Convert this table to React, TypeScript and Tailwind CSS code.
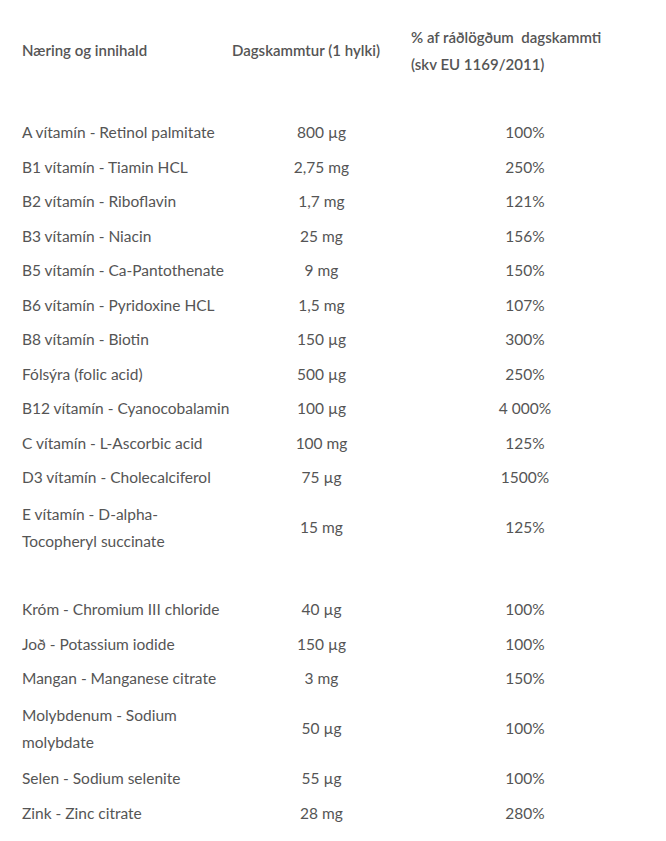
type Row = { name: string[]; dose: string; pct: string } | null;

const ROWS: Row[] = [
  null,
  { name: ['A vítamín - Retinol palmitate'], dose: '800 µg', pct: '100%' },
  { name: ['B1 vítamín - Tiamin HCL'], dose: '2,75 mg', pct: '250%' },
  { name: ['B2 vítamín - Riboflavin'], dose: '1,7 mg', pct: '121%' },
  { name: ['B3 vítamín - Niacin'], dose: '25 mg', pct: '156%' },
  { name: ['B5 vítamín - Ca-Pantothenate'], dose: '9 mg', pct: '150%' },
  { name: ['B6 vítamín - Pyridoxine HCL'], dose: '1,5 mg', pct: '107%' },
  { name: ['B8 vítamín - Biotin'], dose: '150 µg', pct: '300%' },
  { name: ['Fólsýra (folic acid)'], dose: '500 µg', pct: '250%' },
  { name: ['B12 vítamín - Cyanocobalamin'], dose: '100 µg', pct: '4 000%' },
  { name: ['C vítamín - L-Ascorbic acid'], dose: '100 mg', pct: '125%' },
  { name: ['D3 vítamín - Cholecalciferol'], dose: '75 µg', pct: '1500%' },
  { name: ['E vítamín - D-alpha-', 'Tocopheryl succinate'], dose: '15 mg', pct: '125%' },
  null,
  { name: ['Króm - Chromium III chloride'], dose: '40 µg', pct: '100%' },
  { name: ['Joð - Potassium iodide'], dose: '150 µg', pct: '100%' },
  { name: ['Mangan - Manganese citrate'], dose: '3 mg', pct: '150%' },
  { name: ['Molybdenum - Sodium', 'molybdate'], dose: '50 µg', pct: '100%' },
  { name: ['Selen - Sodium selenite'], dose: '55 µg', pct: '100%' },
  { name: ['Zink - Zinc citrate'], dose: '28 mg', pct: '280%' },
];

export default function App() {
  return (
    <div className="min-h-screen bg-white text-[#555] text-[15.5px] leading-[27px]" style={{ fontFamily: 'Lato, "Open Sans", sans-serif' }}>
      <div className="pt-[18px] pl-[22px]">
        {/* header */}
        <div className="grid grid-cols-[200px_179px_248px] h-[65.5px] items-center font-semibold text-[15px]">
          <div>Næring og innihald</div>
          <div className="pl-[10px]">Dagskammtur (1 hylki)</div>
          <div className="pl-[10px]">
            <div>% af ráðlögðum&nbsp; dagskammti</div>
            <div>(skv EU 1169/2011)</div>
          </div>
        </div>

        {ROWS.map((r, i) =>
          r === null ? (
            <div key={i} className="h-[32px]" />
          ) : (
            <div
              key={i}
              className={`grid grid-cols-[200px_179px_248px] items-center ${r.name.length > 1 ? 'h-[65.5px]' : 'h-[34.5px]'}`}
            >
              <div className="whitespace-nowrap">
                {r.name.map((l) => (
                  <div key={l}>{l}</div>
                ))}
              </div>
              <div className="pl-[20px] text-center">{r.dose}</div>
              <div className="text-center">{r.pct}</div>
            </div>
          )
        )}
      </div>
    </div>
  );
}
